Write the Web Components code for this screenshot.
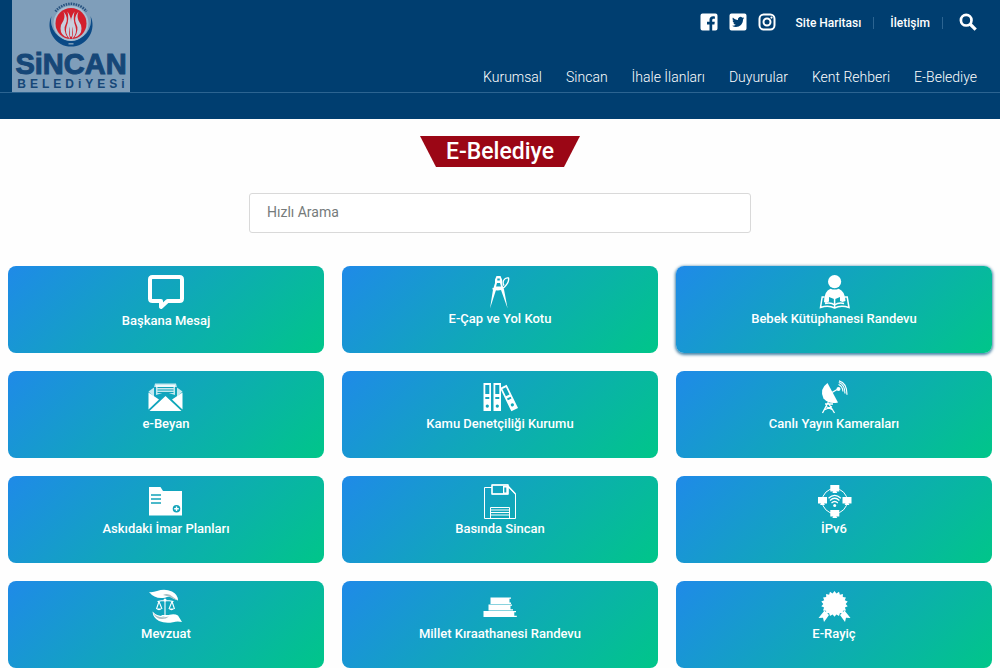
<!DOCTYPE html>
<html lang="tr">
<head>
<meta charset="utf-8">
<meta name="viewport" content="width=device-width, initial-scale=1">
<title>E-Belediye | Sincan Belediyesi</title>
<style>
  body { margin: 0; background: #fefefe; font-family: Roboto, "Noto Sans", sans-serif; }
</style>
</head>
<body>
<municipality-page></municipality-page>

<script>
const ICONS = {
  facebook: ['0 0 18 18', `<path fill-rule="evenodd" d="M2.5 0.5h13a2 2 0 0 1 2 2v13a2 2 0 0 1-2 2h-3.300v-6h2.200l.4-2.700h-2.600V7.200c0-.8.400-1.400 1.500-1.400h1.200V3.500c-3.300-.700-5.400.400-5.400 3.300v2H7v2.700h2.500v6h-7a2 2 0 0 1-2-2v-13a2 2 0 0 1 2-2z"/>`],
  twitter: ['0 0 18 18', `<path fill-rule="evenodd" d="M2.500.5h13a2 2 0 0 1 2 2v13a2 2 0 0 1-2 2h-13a2 2 0 0 1-2-2v-13a2 2 0 0 1 2-2zM14 6.400c.5-.4.900-.8 1.200-1.300-.5.200-.9.300-1.400.4.500-.3.900-.8 1.100-1.400-.5.300-1 .5-1.600.6A2.500 2.500 0 0 0 9 7C7 6.900 5.100 5.900 3.900 4.400c-.7 1.200-.3 2.600.8 3.300-.4 0-.8-.1-1.100-.3 0 1.200.9 2.200 2 2.500-.4.100-.8.100-1.100 0 .3 1 1.200 1.700 2.300 1.800A5 5 0 0 1 3 12.700c4.900 3.100 11.200-.2 11-6.300z"/>`],
  instagram: ['0 0 18 18', `<g fill="none" stroke="currentColor" stroke-width="2"><rect x="1.500" y="1.500" width="15" height="15" rx="4.200"/><circle cx="9" cy="9" r="3.500"/></g><circle cx="13.500" cy="4.600" r="1.100"/>`],
  search: ['0 0 18 18', `<circle cx="7.200" cy="7.200" r="5.300" fill="none" stroke="currentColor" stroke-width="2.700"/><path d="M11 11l5.700 5.700" stroke="currentColor" stroke-width="3.200"/>`],
  message: ['0 0 36 38', `<path fill="none" stroke="currentColor" stroke-width="4" stroke-linejoin="round" d="M4.500 3h27Q34 3 34 5.500v19Q34 27 31.500 27H19.500L13 33V27H4.500Q2 27 2 24.500v-19Q2 3 4.500 3z"/>`],
  compass: ['0 0 36 36', `<path fill-rule="evenodd" d="M14.500 2h4l1.500 3.500v4.500l2 5.500 3.600 19-6.600-18.500h-5L8 34.500l3-19L13 9V5.500zM15.300 4.500v2h2.500v-2zM15 9l-1 3.500h5L18 9z"/><path d="M10.500 14.500q7 3.200 12-1.500 5-5 4-9-3-.8-5 2.500-1 3 .5 5" fill="none" stroke="currentColor" stroke-width="1.400"/>`],
  reader: ['0 0 36 36', `<circle cx="18.600" cy="7.700" r="6.600"/><path d="M8 28q0-11 6.500-13.300 4 1.700 8.200 0Q29 17 29.500 27l-3 1-2.500-1v-4l-5.300 2.300L13 23v4.500L10 29z"/><path d="M8.500 23H6.200L4.500 33.500q8-2.500 14.100.5 6-3 14.400-.5L31.200 23h-2.500M18.600 25v9M9 29.500q6-1.500 9.600 1.500 4-3 9.500-1.500" fill="none" stroke="currentColor" stroke-width="1.500"/>`],
  letter: ['0 0 36 36', `<path opacity=".75" d="M6 8.500 7 4.500h21l1 4 5.500 4L29 18V8H6v10L.5 12.500z"/><path d="M8 6h19v10l-9.500-3L8 16z" opacity=".75"/><path d="M9.500 8.500h16M9.500 11h16M9.500 13.500h16" stroke="var(--cut)" stroke-width="1"/><path d="M.5 13.500 11 20.500.5 30.500zM34.500 13.500v17L24 20.500zM1.500 32 17.500 17 33.500 32z"/>`],
  binders: ['0 0 36 36', `<path fill-rule="evenodd" d="M1.500 4H9v28H1.500zM3.300 6v9h4V6zM3.300 18v2h4v-2zM5.300 25.500a1.600 1.600 0 1 0 .01 0zM11.500 4H19v28h-7.500zM13.300 6v9h4V6zM13.300 18v2h4v-2zM15.300 25.500a1.600 1.600 0 1 0 .01 0z"/><path fill-rule="evenodd" transform="translate(27 19) rotate(-26)" d="M-3.700-13h7.400v26h-7.400zM-2-11v8h4v-8zM-2-.5v2h4v-2zM0 6a1.600 1.600 0 1 0 .01 0z"/>`],
  dish: ['0 0 36 36', `<path d="M11.500 4Q3 10 7.500 19.500 13 25.500 22 23.500z"/><path d="M16 13.500 22 10" stroke="currentColor" stroke-width="1.400"/><circle cx="22.500" cy="10" r="2"/><path d="M12 23.500 6.500 34M12 23.500 18.500 34M8 31l8-3.500M17 31l-7-3.500M9 25h8" fill="none" stroke="currentColor" stroke-width="1.300"/><path d="M22.500 5.500q4 1.500 4.500 7M22.800 3.500q6 2 6.200 11M23 1.800q8 2 8 14" fill="none" stroke="currentColor" stroke-width="1.200"/>`],
  folder: ['0 0 36 36', `<path d="M1 3h11.500L15 7h19v24.500H1z"/><path d="M3 11h10M3 15h10M3 19h10" stroke="var(--cut)" stroke-width="1.700"/><circle cx="28.500" cy="24.800" r="3.800" fill="var(--cut)"/><path d="M28.500 22.500v4.600M26.200 24.800h4.600" stroke="currentColor" stroke-width="1.400"/>`],
  floppy: ['0 0 36 36', `<g fill="none" stroke="currentColor"><path d="M10 3.500H2.500v31h31V10L27 3.500M10 1v9h16V1zM8.500 34V23.500h19V34"/><path d="M10 1h16v9H10zM26 2l7.500 8" stroke-width="1.300"/><path d="M9 26h18M9 28.500h18M9 31h18"/></g><path fill-rule="evenodd" d="M21 2h5v8h-5zM22.300 3.500v5h2v-5z"/>`],
  network: ['0 0 36 36', `<circle cx="18.700" cy="17" r="12.500" fill="none" stroke="currentColor"/><path d="M14.300 1h9v6.500h-3l1 1.500h-5l1-1.500h-3zM14.300 26h9v6.500h-3l1 1.500h-5l1-1.500h-3zM2 13h9v6.500H8L9 21H4l1-1.500H2zM26.500 13h9v6.500h-3l1 1.500h-5l1-1.500h-3z"/><circle cx="18.700" cy="21.500" r="1.500"/><path d="M15.500 19q3.200-3 6.400 0M14 16.500q4.700-4.500 9.400 0M12.500 14.200q6.200-5.500 12.400 0" fill="none" stroke="currentColor" stroke-width="1.200"/>`],
  justice: ['0 0 36 36', `<path d="M1 3q4 .5 8-1Q17-.5 24 2.500q6 3 6 9l-4.500-1.800Q22 6.500 17 8.700 7 10.500 1 3z"/><path d="M15 6q5-3 10 2l5 3.500-4.500-1.800Q21 7 15 6z" fill="#a9bfc4"/><path d="M4.500 22.500q5 5.500 13 4.500 8-3 12.500-.5l4 6.500q-5-1-9 .3-8 1.500-14-1.300-6-3-6.500-9.500z"/><path d="M5 24q5 5.500 13 4l3-.5q-3 2.500-7 2.500-6 0-9-6z" fill="#a9bfc4"/><path d="M17 10v16M9.500 12.500q7.500-2 16 0M13.500 26.500h8M11 12.500 8.500 20M11 12.500l3 7.500M24 12.500 21 20M24 12.500l2.500 7.500" fill="none" stroke="currentColor" stroke-width="1.100"/><path d="M8 19.500h6q-3 3.500-6 0zM20.500 19.500h6q-3 3.500-6 0z"/><circle cx="17" cy="11" r="1.500"/>`],
  books: ['0 0 36 36', `<path d="M8.500 8.500H29v1.300h-1.500v3.700H29V15H8.500zM6.500 15.500H30v1.300h-1.500v3.400H31v1.300H6.500zM1.500 22H34v1.300h-1.700v3.400h2.500V28H1.500z"/>`],
  award: ['0 0 36 36', `<path d="m18.500 2 1.900 2.400 2.600-1.600.9 2.900 3-.7-.1 3.100 3.100.3-1.100 2.900 2.900 1.200-2 2.400 2 2.400-2.800 1.200 1.100 2.900-3.100.3.100 3.100-3-.7-1 2.900-2.600-1.600-1.900 2.400-1.900-2.400-2.600 1.600-1-2.900-3 .7.100-3.100-3.100-.3 1.100-2.900-2.800-1.200 2-2.400-2-2.400 2.900-1.200-1.100-2.900 3.100-.3-.1-3.100 3 .7.900-2.900 2.600 1.600z"/><path d="M8.500 21.500 13 26l-5 7-1-4.200-4.500.2zM28.500 21.500 24 26l5 7 1-4.200 4.500.2z"/>`]
};

/* Registers an element whose open shadow root holds the given styles and markup. */
function element(name, css, html, connect) {
  const template = document.createElement('template');
  template.innerHTML = `<style>*{box-sizing:border-box}${css}</style>${html}`;
  customElements.define(name, class extends HTMLElement {
    constructor() {
      super();
      this.attachShadow({ mode: 'open' }).append(template.content.cloneNode(true));
    }
    connectedCallback() { if (connect) connect(this, this.shadowRoot); }
  });
}

element('line-icon',
  `:host { display: block; width: 18px; } svg { display: block; width: 100%; height: auto; fill: currentColor; overflow: visible; --cut: #12a3b9; }`,
  `<svg aria-hidden="true"></svg>`,
  (host, root) => {
    const icon = ICONS[host.getAttribute('name')];
    if (!icon) return;
    const svg = root.querySelector('svg');
    svg.setAttribute('viewBox', icon[0]);
    svg.innerHTML = icon[1];
  });

element('city-logo',
  `:host { display: block; }
   a { display: flex; flex-direction: column; align-items: center; width: 118px; height: 92px; background: #7f9eba; color: #164778; text-decoration: none; font-family: "Liberation Sans", sans-serif; font-weight: 700; }
   svg { display: block; flex: none; width: 48px; height: 50px; }
   .name { font-size: 29px; line-height: 28px; -webkit-text-stroke: 1px currentColor; }
   .kind { font-size: 12px; line-height: 12px; letter-spacing: 4px; margin-right: -4px; }`,
  `<a href="#">
    <svg viewBox="0 0 48 50" aria-hidden="true">
      <path d="M4.500 16a21.500 21.500 0 1 0 39 0 20 20 0 1 1-39 0z" fill="#0b4a86"/>
      <path d="M8.500 11.500a19.500 19.500 0 0 1 31 0" fill="none" stroke="#27527f" stroke-width="2.500" stroke-dasharray="1.500 1"/>
      <circle cx="24" cy="23.500" r="17.500" fill="#a9bfd2"/>
      <circle cx="24" cy="23.500" r="15.500" fill="#d3202d"/>
      <g fill="#c8cfdd" transform="translate(.5 .5)"><path d="M20 37q-7-2-7-9 0-4 3-8 2-4 0-9 5 6 2.500 12Q15 29 20 37zM27 37q7-2 7-9 0-4-3-8-2-4 0-9-5 6-2.500 12Q32 29 27 37z"/><path d="M22 38q-5-5-3-12 3-7 1-15 5 7 2.500 15-2 5 0 12zM25 38q5-5 3-12-3-7-1-15-5 7-2.500 15 2 5 0 12z"/><path d="M23.500 16q2 9 1 20h-2q-1-11 1-20z"/></g>
      <path d="M21.500 43.800h5" stroke="#7f9eba" stroke-width="1.500"/>
    </svg>
    <span class="name">SiNCAN</span><span class="kind">BELEDiYESi</span>
  </a>`);

element('site-header',
  `:host { display: block; background: #003e70; color: #fff; }
   .top { display: flex; justify-content: space-between; padding: 0 23px 0 12px; border-bottom: 1px solid #2c6491; }
   .side { display: flex; flex-direction: column; align-items: flex-end; gap: 35px; padding-top: 12px; }
   .tools, .social, nav { display: flex; align-items: center; }
   .social { gap: 11px; margin-right: 20px; }
   .tools a { display: block; color: inherit; text-decoration: none; font-size: 12px; line-height: 20px; font-weight: 500; }
   .tools .text { padding: 2px 13px 0 0; margin-right: 16px; background: linear-gradient(#2c6491, #2c6491) right 6px / 1px 12px no-repeat; }
   .tools { height: 20px; }
   button { display: block; padding: 0; border: 0; background: none; color: inherit; cursor: pointer; }
   nav { gap: 24px; }
   ::slotted(a) { color: #fff; text-decoration: none; font-size: 14px; line-height: 20px; font-weight: 300; }
   .strip { height: 26px; }`,
  `<header>
    <div class="top">
      <city-logo></city-logo>
      <div class="side">
        <div class="tools">
          <div class="social">
            <a href="#" aria-label="Facebook"><line-icon name="facebook"></line-icon></a>
            <a href="#" aria-label="Twitter"><line-icon name="twitter"></line-icon></a>
            <a href="#" aria-label="Instagram"><line-icon name="instagram"></line-icon></a>
          </div>
          <a class="text" href="#">Site Haritası</a>
          <a class="text" href="#">İletişim</a>
          <button type="button" aria-label="Ara"><line-icon name="search"></line-icon></button>
        </div>
        <nav><slot></slot></nav>
      </div>
    </div>
    <div class="strip"></div>
  </header>`);

element('page-title',
  `:host { display: block; }
   h1 { margin: 0 auto; width: 160px; text-align: center; color: #fff; background: #9b0615; font-size: 23px; line-height: 31px; font-weight: 500; clip-path: polygon(0 0, 100% 0, 90% 100%, 10% 100%); }`,
  `<h1><slot></slot></h1>`);

element('quick-search',
  `:host { display: block; width: 100%; max-width: 502px; }
   input { display: block; width: 100%; height: 40px; padding: 0 17px 2px; border: 1px solid #d9d9d9; border-radius: 3px; background: #fff; color: #333; font: 400 14px/20px Roboto, sans-serif; outline: 0; }
   input::placeholder { color: #757b7b; opacity: 1; }`,
  `<input type="search" aria-label="Hızlı Arama" placeholder="Hızlı Arama">`);

element('service-card',
  `:host { display: block; }
   a { display: flex; flex-direction: column; align-items: center; height: 87px; padding-top: 8px; border-radius: 8px; color: #fff; text-decoration: none; background: linear-gradient(135deg, #1f8ae8, #00c689); }
   :host([active]) a, a:hover { box-shadow: 0 1px 3px 1px #4b86a8; }
   line-icon { width: 36px; }
   span { font-size: 13px; line-height: 18px; font-weight: 500; }`,
  `<a href="#"><span><slot></slot></span></a>`,
  (host, root) => {
    const icon = document.createElement('line-icon');
    icon.setAttribute('name', host.getAttribute('icon'));
    root.querySelector('a').prepend(icon);
  });

element('municipality-page',
  `:host { display: block; }
   main { display: flex; flex-direction: column; align-items: center; padding: 17px 8px 0; }
   quick-search { margin-top: 26px; }
   section { align-self: stretch; display: grid; grid-template-columns: repeat(3, 1fr); gap: 18px; margin-top: 33px; }`,
  `<site-header>
    <a href="#">Kurumsal</a><a href="#">Sincan</a><a href="#">İhale İlanları</a><a href="#">Duyurular</a><a href="#">Kent Rehberi</a><a href="#">E-Belediye</a>
  </site-header>
  <main>
    <page-title>E-Belediye</page-title>
    <quick-search></quick-search>
    <section>
      <service-card icon="message">Başkana Mesaj</service-card>
      <service-card icon="compass">E-Çap ve Yol Kotu</service-card>
      <service-card icon="reader" active>Bebek Kütüphanesi Randevu</service-card>
      <service-card icon="letter">e-Beyan</service-card>
      <service-card icon="binders">Kamu Denetçiliği Kurumu</service-card>
      <service-card icon="dish">Canlı Yayın Kameraları</service-card>
      <service-card icon="folder">Askıdaki İmar Planları</service-card>
      <service-card icon="floppy">Basında Sincan</service-card>
      <service-card icon="network">İPv6</service-card>
      <service-card icon="justice">Mevzuat</service-card>
      <service-card icon="books">Millet Kıraathanesi Randevu</service-card>
      <service-card icon="award">E-Rayiç</service-card>
    </section>
  </main>`);
</script>
</body>
</html>
